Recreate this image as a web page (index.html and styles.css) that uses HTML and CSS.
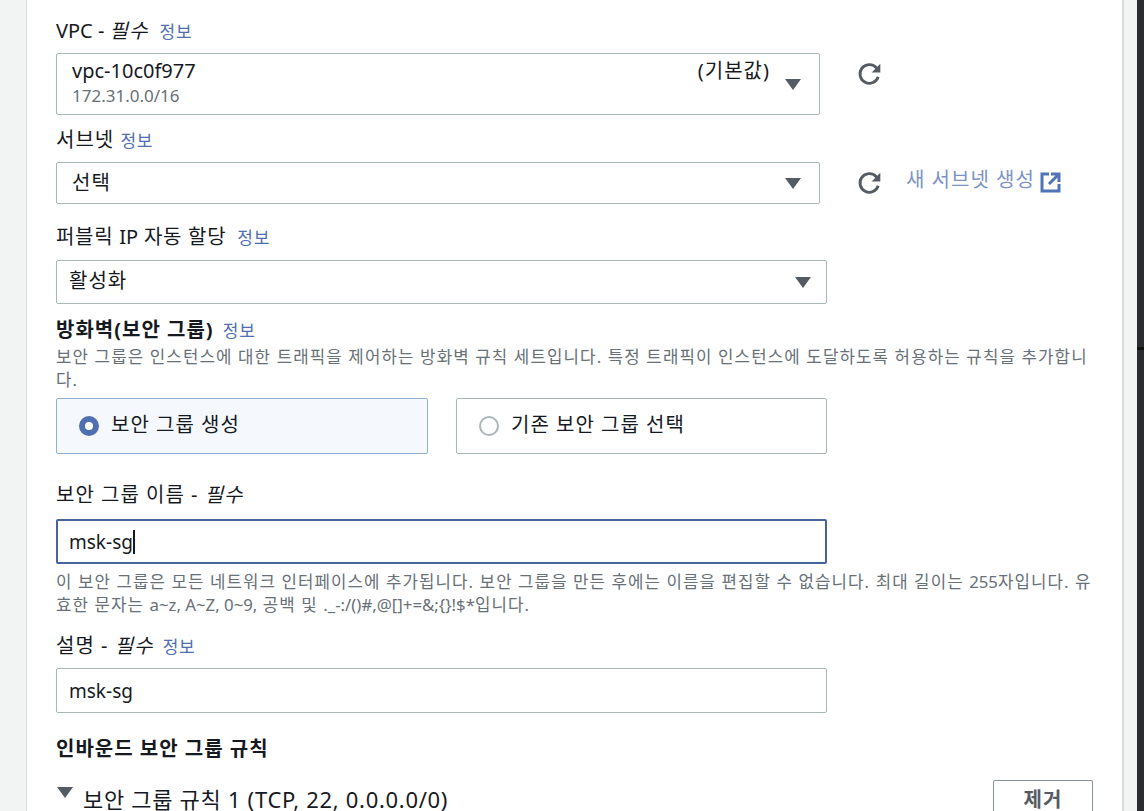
FILE: index.html
```html
<!DOCTYPE html>
<html lang="ko">
<head>
    <meta charset="UTF-8">
    <title>인스턴스 네트워크 설정</title>
    <link rel="stylesheet" href="styles.css">
</head>
<body>
    <div class="page">
        <div class="gutter"></div>
        <main class="panel">
            <div class="label label-first"><span class="lat">VPC - </span><i>필수</i> <a class="info">정보</a></div>
            <div class="row">
                <div class="select select-vpc">
                    <div class="select-text">
                        <div class="select-top"><span class="lat">vpc-10c0f977</span><span>(기본값)</span></div>
                        <div class="select-sub lat">172.31.0.0/16</div>
                    </div>
                    <span class="caret"></span>
                </div>
                <svg class="refresh" viewBox="0 0 24 24"><path d="M19.6 14.5A8.6 8.6 0 1 1 17.6 6L20 8.6"/><path class="fill" d="M21.5 2.5v8h-8z"/></svg>
            </div>
            <div class="label label-subnet">서브넷 <a class="info">정보</a></div>
            <div class="row">
                <div class="select select-subnet">
                    <span class="select-value">선택</span>
                    <span class="caret"></span>
                </div>
                <svg class="refresh" viewBox="0 0 24 24"><path d="M19.6 14.5A8.6 8.6 0 1 1 17.6 6L20 8.6"/><path class="fill" d="M21.5 2.5v8h-8z"/></svg>
                <a class="new-link">새 서브넷 생성
                    <svg class="external" viewBox="0 0 22 22"><path d="M9 3H2v17h17v-7"/><path d="M11 3h8v8M19 3 9 13"/></svg>
                </a>
            </div>
            <div class="label label-ip">퍼블릭 <span class="lat">IP</span> 자동 할당 <a class="info">정보</a></div>
            <div class="select select-wide">
                <span class="select-value">활성화</span>
                <span class="caret"></span>
            </div>
            <div class="label label-strong">방화벽(보안 그룹) <a class="info">정보</a></div>
            <p class="hint">보안 그룹은 인스턴스에 대한 트래픽을 제어하는 방화벽 규칙 세트입니다. 특정 트래픽이 인스턴스에 도달하도록 허용하는 규칙을 추가합니다.</p>
            <div class="cards">
                <div class="card card-on"><span class="radio radio-on"></span>보안 그룹 생성</div>
                <div class="card"><span class="radio"></span>기존 보안 그룹 선택</div>
            </div>
            <div class="label label-name">보안 그룹 이름 - <i>필수</i></div>
            <div class="input input-focus"><span>msk-sg</span><span class="cursor"></span></div>
            <p class="hint hint-name">이 보안 그룹은 모든 네트워크 인터페이스에 추가됩니다. 보안 그룹을 만든 후에는 이름을 편집할 수 없습니다. 최대 길이는 <span class="lat">255</span>자입니다. 유효한 문자는 <span class="lat">a~z, A~Z, 0~9,</span> 공백 및 <span class="lat">._-:/()#,@[]+=&amp;;{}!$*</span>입니다.</p>
            <div class="label label-desc">설명 - <i>필수</i> <a class="info">정보</a></div>
            <div class="input"><span>msk-sg</span></div>
            <div class="label label-strong label-inbound">인바운드 보안 그룹 규칙</div>
            <div class="rule-head">
                <div class="rule-title"><span class="caret rule-caret"></span>보안 그룹 규칙 1 (TCP, 22, 0.0.0.0/0)</div>
                <button class="remove">제거</button>
            </div>
        </main>
        <div class="gutter gutter-right"></div>
        <div class="edge"><div class="edge-line"></div></div>
    </div>
</body>
</html>
```

FILE: styles.css
```css
* {
    margin: 0;
    padding: 0;
    box-sizing: border-box;
}
body {
    font-family: "Noto Sans", "Noto Sans CJK KR", sans-serif;
    font-size: 20px;
    letter-spacing: 1px;
    color: #16191f;
    background: #fff;
    overflow: hidden;
}
.lat {
    letter-spacing: 0;
}
.page {
    display: flex;
    height: 811px;
    overflow: hidden;
}
.gutter {
    width: 26px;
    background: #f2f3f3;
}
.gutter-right {
    width: 13px;
}
.edge {
    width: 7px;
    background: #2a2c30;
    padding-top: 347px;
}
.edge-line {
    height: 3px;
    background: #111;
}
.panel {
    width: 1098px;
    padding: 0 29px 0 29px;
    background: #fff;
    border-left: 1px solid #d5dbdb;
    border-right: 2px solid #d5dbdb;
}
.label {
    line-height: 24px;
    height: 24px;
}
.info {
    font-size: 17px;
    letter-spacing: .8px;
    color: #4f6fb0;
    margin-left: 3px;
}
.label-first {
    margin-top: 19px;
}
.label-first .info {
    margin-left: 5px;
}
.label-subnet {
    margin-top: 13px;
}
.label-subnet .info {
    margin-left: 0;
}
.label-ip {
    margin-top: 21px;
    letter-spacing: .7px;
}
.label-ip .info {
    margin-left: 5px;
}
.label-strong {
    font-weight: 700;
    margin-top: 14px;
}
.label-strong .info {
    font-weight: 400;
    margin-left: 3px;
}
.row {
    display: flex;
    align-items: flex-start;
}
.select {
    display: flex;
    align-items: center;
    justify-content: space-between;
    width: 764px;
    margin-top: 10px;
    padding: 0 18px 0 15px;
    border: 1px solid #aab7b8;
    border-radius: 2px;
    background: #fff;
}
.select-vpc {
    height: 62px;
}
.select-subnet {
    height: 42px;
}
.select-wide {
    width: 771px;
    height: 44px;
    margin-top: 11px;
    padding: 0 15px 0 12px;
}
.select-value {
    margin-top: -4px;
}
.select-wide .select-value {
    margin-top: -6px;
}
.select-text {
    flex: 1;
    margin-right: 15px;
}
.select-top {
    display: flex;
    justify-content: space-between;
    line-height: 24px;
    margin-top: -1px;
}
.select-sub {
    font-size: 17px;
    line-height: 25px;
    color: #687078;
}
.caret {
    width: 0;
    height: 0;
    border-left: 8px solid transparent;
    border-right: 8px solid transparent;
    border-top: 11px solid #545b64;
}
.select-vpc .caret {
    margin-top: 1px;
}
.refresh {
    width: 26px;
    height: 26px;
    margin: 18px 0 0 37px;
    fill: none;
    stroke: #545b64;
    stroke-width: 2.6;
}
.refresh .fill {
    fill: #545b64;
    stroke: none;
}
.new-link {
    display: flex;
    align-items: center;
    gap: 5px;
    margin: 15px 0 0 23px;
    color: #7c93c6;
    line-height: 24px;
}
.external {
    width: 22px;
    height: 22px;
    margin-top: 4px;
    fill: none;
    stroke: #4f74b8;
    stroke-width: 3;
}
.hint {
    font-size: 16.8px;
    line-height: 23px;
    letter-spacing: 1.12px;
    word-break: break-all;
    color: #687078;
    margin-top: 3px;
}
.cards {
    display: flex;
    justify-content: space-between;
    width: 771px;
    margin-top: 7px;
}
.card {
    display: flex;
    align-items: center;
    width: 371px;
    height: 56px;
    padding-bottom: 6px;
    padding-left: 22px;
    border: 1px solid #aab7b8;
    border-radius: 2px;
}
.card-on {
    width: 372px;
    background: #f5f9fd;
    border-color: #8fb0d0;
}
.radio {
    width: 20px;
    height: 20px;
    margin: 6px 12px 0 0;
    border: 2px solid #aab7b8;
    border-radius: 50%;
    background: #fff;
}
.radio-on {
    border: 6px solid #4f6fb0;
}
.label-name {
    margin-top: 29px;
}
.input {
    display: flex;
    align-items: center;
    width: 771px;
    height: 45px;
    margin-top: 12px;
    padding-left: 12px;
    border: 1px solid #aab7b8;
    border-radius: 2px;
    font-size: 19px;
    letter-spacing: 0;
}
.input-focus {
    border: 2px solid #44639f;
    padding-left: 11px;
}
.cursor {
    width: 2px;
    height: 24px;
    background: #16191f;
}
.hint-name {
    margin-top: 6px;
    letter-spacing: 1.08px;
}
.label-desc {
    margin-top: 18px;
}
.label-desc + .input {
    margin-top: 10px;
}
.label-inbound {
    margin-top: 24px;
}
.rule-head {
    display: flex;
    justify-content: space-between;
    align-items: flex-start;
    margin-top: 19px;
}
.rule-title {
    display: flex;
    align-items: center;
    margin-top: 2px;
    font-size: 22px;
    letter-spacing: .7px;
}
.rule-caret {
    margin: -12px 10px 0 1px;
}
.remove {
    width: 100px;
    height: 40px;
    padding-bottom: 4px;
    background: #fff;
    border: 1px solid #879196;
    border-radius: 2px;
    font-family: inherit;
    font-size: 20px;
    letter-spacing: 1px;
    font-weight: 700;
    color: #545b64;
}
```
